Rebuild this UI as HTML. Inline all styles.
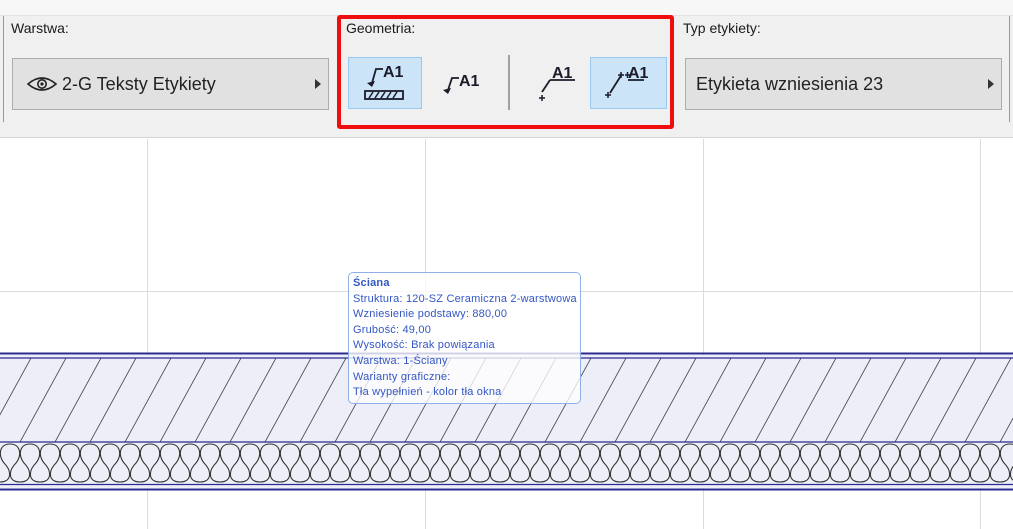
<!DOCTYPE html>
<html><head><meta charset="utf-8"><style>
*{margin:0;padding:0;box-sizing:border-box}
body{width:1013px;height:529px;overflow:hidden;background:#fff;font-family:"Segoe UI","Liberation Sans","DejaVu Sans",sans-serif;position:relative}
.abs{position:absolute}
.lbl{font-size:14px;color:#1a1a1a}
.btn{background:#e1e1e1;border:1px solid #adadad;height:52px;font-size:18px;color:#222;line-height:50px}
.tri{position:absolute;right:7px;top:20px;width:0;height:0;border-left:6px solid #333;border-top:5px solid transparent;border-bottom:5px solid transparent}
.sel{background:#cce4f7;border:1px solid #99c9ef}
.tt{font-size:11px;color:#3357c4;line-height:15.6px;letter-spacing:0.2px}
</style></head><body>
<div class="abs" style="left:0;top:0;width:1013px;height:15px;background:#f7f7f7"></div>
<div class="abs" style="left:0;top:15px;width:1013px;height:123px;background:#f0f0f0;border-top:1px solid #e2e2e2;border-bottom:1px solid #d6d6d6"></div>
<div class="abs" style="left:3px;top:16px;width:1px;height:106px;background:#9a9a9a"></div>
<div class="abs" style="left:1009px;top:16px;width:1px;height:106px;background:#9a9a9a"></div>

<div class="abs lbl" style="left:11px;top:20px">Warstwa:</div>
<div class="abs btn" style="left:12px;top:58px;width:317px">
<svg class="abs" style="left:13px;top:16px" width="32" height="18" viewBox="0 0 32 18"><path d="M2 9 Q16 -3 30 9 Q16 21 2 9Z" fill="none" stroke="#222" stroke-width="1.6"/><circle cx="16" cy="9" r="4.2" fill="none" stroke="#222" stroke-width="1.6"/><circle cx="16" cy="9" r="1.6" fill="#222"/></svg>
<span class="abs" style="left:49px;top:0">2-G Teksty Etykiety</span><div class="tri"></div></div>

<div class="abs lbl" style="left:346px;top:20px">Geometria:</div>
<div class="abs sel" style="left:348px;top:57px;width:74px;height:52px"></div>
<div class="abs sel" style="left:590px;top:57px;width:77px;height:52px"></div>
<div class="abs" style="left:508px;top:55px;width:2px;height:55px;background:#a0a0a0"></div>
<svg class="abs" style="left:348px;top:57px" width="320" height="52" viewBox="0 0 320 52">
<g font-family="Liberation Sans,sans-serif" font-weight="bold" font-size="16" fill="#1b1b2a">
<text x="35" y="20">A1</text><text x="111" y="29">A1</text><text x="204" y="21">A1</text><text x="280" y="21">A1</text></g>
<g stroke="#1b1b2a" stroke-width="1.8" fill="none">
<path d="M35 12 H28 L24 26"/><path d="M111 21 H104 L100 33"/>
<rect x="17" y="34" width="38" height="8"/>
<path d="M202 23 H227 M202 23 L194 35 M280 23 H296 M274 17 L262 36"/>
</g>
<g fill="#1b1b2a"><path d="M19 26 L24 30 L27 24Z"/><path d="M95 33 L100 37 L103 31Z"/></g>
<g stroke="#1b1b2a" stroke-width="1.5"><path d="M21 41 L25 35 M27 41 L31 35 M33 41 L37 35 M39 41 L43 35 M45 41 L49 35"/>
<path d="M191 41 h6 M194 38 v6 M257 38 h6 M260 35 v6 M270 18 h6 M273 15 v6 M277 18 h5 M279.5 15 v6"/></g>
</svg>
<div class="abs" style="left:337px;top:15px;width:337px;height:114px;border:4px solid #f00d0d;border-radius:3px"></div>

<div class="abs lbl" style="left:683px;top:20px">Typ etykiety:</div>
<div class="abs btn" style="left:685px;top:58px;width:317px"><span class="abs" style="left:10px;top:0">Etykieta wzniesienia 23</span><div class="tri"></div></div>

<svg class="abs" style="left:0;top:139px" width="1013" height="390" viewBox="0 139 1013 390">
<defs>
<pattern id="h" patternUnits="userSpaceOnUse" x="0" y="358" width="35" height="84" patternTransform="skewX(-28.7)">
<line x1="17" y1="-10" x2="17" y2="100" stroke="#3a3a4a" stroke-width="0.9"/></pattern>
<g id="tear" fill="none" stroke="#333" stroke-width="1.1">
<path d="M10 2 C-1 2 -2 14 4 21 C12 29 12 40 0 40"/>
<path d="M10 2 C21 2 22 14 16 21 C8 29 8 40 20 40"/>
</g>
<pattern id="ins" patternUnits="userSpaceOnUse" x="0" y="442" width="20" height="42">
<use href="#tear"/><use href="#tear" x="-20"/><use href="#tear" x="20"/>
</pattern>
</defs>
<g stroke="#dcdcdc" stroke-width="1"><path d="M147.5 139V529 M425.5 139V529 M703.5 139V529 M980.5 139V529 M0 291.5H1013"/></g>
<rect x="0" y="355" width="1013" height="133" fill="#eeeef8"/>
<rect x="0" y="358" width="1013" height="84" fill="url(#h)"/>
<rect x="0" y="442" width="1013" height="42" fill="url(#ins)"/>
<g stroke="#2a2a90"><path d="M0 353.5H1013" stroke-width="2"/><path d="M0 358H1013 M0 442H1013 M0 484.5H1013" stroke-width="1.2"/><path d="M0 489.5H1013" stroke-width="2"/></g>
</svg>

<div class="abs" style="left:348px;top:272px;width:233px;height:132px;border:1px solid #8fb0e6;border-radius:5px;background:rgba(255,255,255,0.78);padding:3px 0 0 4px">
<div class="tt" style="font-weight:bold">Ściana</div>
<div class="tt">Struktura: 120-SZ Ceramiczna 2-warstwowa</div>
<div class="tt">Wzniesienie podstawy: 880,00</div>
<div class="tt">Grubość: 49,00</div>
<div class="tt">Wysokość: Brak powiązania</div>
<div class="tt">Warstwa: 1-Ściany</div>
<div class="tt">Warianty graficzne:</div>
<div class="tt">Tła wypełnień - kolor tła okna</div>
</div>
</body></html>
